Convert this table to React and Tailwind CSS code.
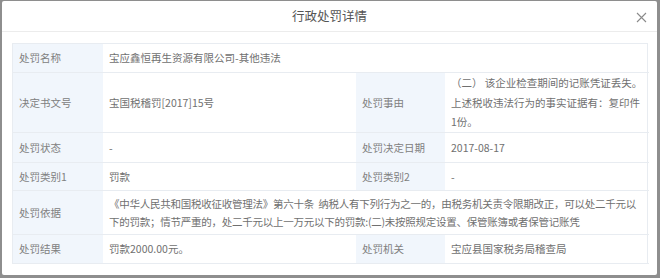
import React from "react";

const L = ({ children, h }) => (
  <div className={`bg-[#f1f6fc] border-b border-[#e8ecf1] pl-[6px] flex items-center text-[#808080] ${h}`}>{children}</div>
);
const V = ({ children, h, span = "" }) => (
  <div className={`border-b border-[#e8ecf1] pl-[6px] pr-[4px] flex items-center text-[#707070] ${h} ${span}`}>{children}</div>
);

export default function App() {
  return (
    <div className="w-[660px] h-[278px] bg-[#8e8e8e] pt-[1px] pl-[2px] pr-[3px] font-['Noto_Sans_CJK_SC','Microsoft_YaHei',sans-serif]">
      <div className="bg-white h-[274px] rounded-[2px] flex flex-col">
        <div className="relative h-[31px] border-b border-[#ececec] flex items-center justify-center shrink-0">
          <span className="text-[12.5px] text-[#555]">行政处罚详情</span>
          <svg className="absolute right-[10px] top-[11px]" width="11" height="11" viewBox="0 0 11 11">
            <path d="M1 1L10 10M10 1L1 10" stroke="#8a8a8a" strokeWidth="1.1" fill="none" />
          </svg>
        </div>
        <div className="pt-[11px] pl-[10px] pr-[9px] text-[10.5px]">
          <div className="grid grid-cols-[90px_253px_89px_204px] border-t border-r border-l border-[#e8ecf1]">
            <L h="h-[29px]">处罚名称</L>
            <V h="h-[29px]" span="col-span-3">宝应鑫恒再生资源有限公司-其他违法</V>

            <L h="h-[60px]">决定书文号</L>
            <V h="h-[60px]">宝国税稽罚[2017]15号</V>
            <L h="h-[60px]">处罚事由</L>
            <V h="h-[60px]">
              <div className="leading-[19.5px] whitespace-nowrap">
                （二） 该企业检查期间的记账凭证丢失。<br />
                上述税收违法行为的事实证据有：复印件<br />
                1份。
              </div>
            </V>

            <L h="h-[30px]">处罚状态</L>
            <V h="h-[30px]">-</V>
            <L h="h-[30px]">处罚决定日期</L>
            <V h="h-[30px]">2017-08-17</V>

            <L h="h-[28px]">处罚类别1</L>
            <V h="h-[28px]">罚款</V>
            <L h="h-[28px]">处罚类别2</L>
            <V h="h-[28px]">-</V>

            <L h="h-[44px]">处罚依据</L>
            <V h="h-[44px]" span="col-span-3">
              <div className="leading-[18px] whitespace-pre tracking-[-0.25px]">
                {"《中华人民共和国税收征收管理法》第六十条  纳税人有下列行为之一的，由税务机关责令限期改正，可以处二千元以"}<br />
                {"下的罚款；情节严重的，处二千元以上一万元以下的罚款:(二)未按照规定设置、保管账簿或者保管记账凭"}
              </div>
            </V>

            <L h="h-[29px]">处罚结果</L>
            <V h="h-[29px]">罚款2000.00元。</V>
            <L h="h-[29px]">处罚机关</L>
            <V h="h-[29px]">宝应县国家税务局稽查局</V>
          </div>
        </div>
      </div>
    </div>
  );
}
